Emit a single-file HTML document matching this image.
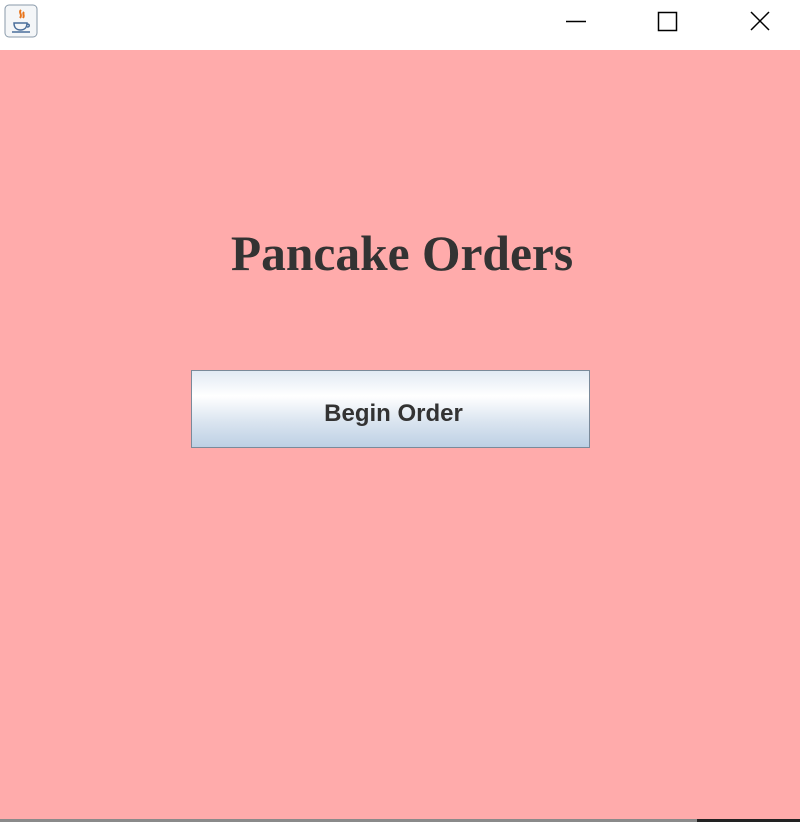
<!DOCTYPE html>
<html><head><style>
html,body{margin:0;padding:0;width:800px;height:822px;overflow:hidden;background:#fff;}
.bar{position:absolute;left:0;top:0;width:800px;height:50px;background:#fff;}
.content{position:absolute;left:0;top:50px;width:800px;height:769px;background:#ffabab;}
.bottom{position:absolute;left:0;top:819px;width:800px;height:3px;background:#8a8a8a;}
.bottom2{position:absolute;left:697px;top:819px;width:103px;height:3px;background:#222;}
h1{position:absolute;left:2px;width:800px;top:225px;margin:0;text-align:center;font:bold 49.5px "Liberation Serif",serif;color:#333;}
.btn{position:absolute;left:191px;top:370px;width:397px;height:76px;border:1px solid #7a8a9a;
background:linear-gradient(#e2eaf4 0%,#ffffff 33%,#dbe5f0 66%,#bdd0e4 100%);}
.btn span{position:absolute;left:3px;width:397px;top:2px;text-align:center;font:bold 24px/82px "Liberation Sans",sans-serif;color:#333;}
</style></head><body>
<div class="bar">
<svg width="34" height="34" style="position:absolute;left:4px;top:4px" viewBox="0 0 34 34">
<rect x="1" y="1" width="32" height="32" rx="4" fill="#f4f6f8" stroke="#8a9aaa"/>
<path d="M17 6c-3 3 2 4-1 8M20 8c-2 2 1 3-1 6" stroke="#e8741a" stroke-width="2" fill="none"/>
<path d="M10 19h13c0 5-3 7-6.5 7S10 24 10 19zM23 20c3 0 3 3 0 3" stroke="#4a6e9a" stroke-width="1.5" fill="none"/>
<path d="M8 28h18" stroke="#4a6e9a" stroke-width="1.5"/>
</svg>
<svg width="800" height="50" style="position:absolute;left:0;top:0">
<path d="M566 21.5h20" stroke="#000" stroke-width="1.5"/>
<rect x="658.5" y="12.5" width="18" height="18" fill="none" stroke="#000" stroke-width="1.5"/>
<path d="M751 12l18 18M769 12l-18 18" stroke="#000" stroke-width="1.5"/>
</svg>
</div>
<div class="content"></div>
<h1>Pancake Orders</h1>
<div class="btn"><span>Begin Order</span></div>
<div class="bottom"></div><div class="bottom2"></div>
</body></html>
